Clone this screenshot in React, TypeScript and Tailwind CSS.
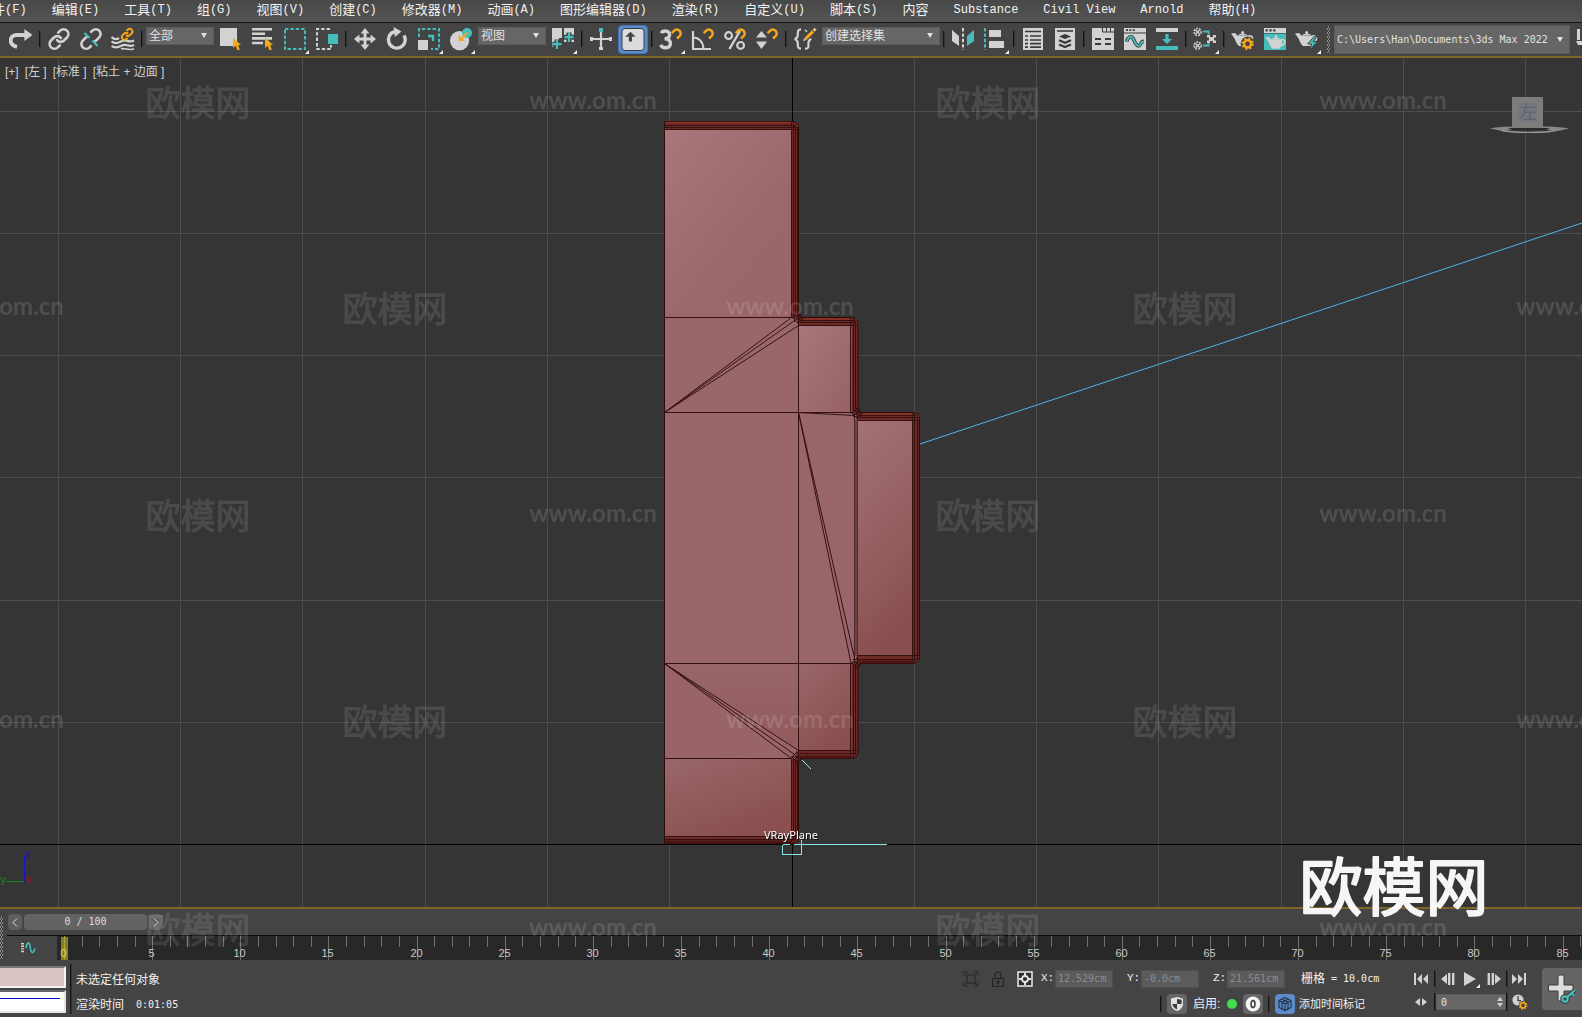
import React from "react";

type IconProps = {
  children: React.ReactNode;
  className?: string;
};

const LIGHT = "#d2d2d2";
const TEAL = "#45bdbd";
const AMBER = "#f5a81c";

const Icon: React.FC<IconProps> = ({ children, className = "h-6 w-6" }) => (
  <svg viewBox="0 0 24 24" className={className} fill="none" aria-hidden="true">
    {children}
  </svg>
);

type ToolProps = {
  label: string;
  children: React.ReactNode;
  flyout?: boolean;
  active?: boolean;
};

const Tool: React.FC<ToolProps> = ({ label, children, flyout, active }) => (
  <button
    type="button"
    aria-label={label}
    className="relative grid h-8 w-8 shrink-0 place-items-center"
  >
    {active && (
      <span className="absolute inset-x-px top-0.5 bottom-px rounded-sm border border-[#4673b5] bg-[#5c8bc9]" />
    )}
    <Icon className="relative h-6 w-6">{children}</Icon>
    {flyout && (
      <svg viewBox="0 0 4 4" className="absolute right-0.5 bottom-px h-1 w-1" aria-hidden="true">
        <path d="M4 0V4H0Z" fill="#f0f0f0" />
      </svg>
    )}
  </button>
);

const Divider = () => (
  <span className="mx-0.5 mt-2 h-4 w-0.5 shrink-0 border-l border-[#161616] bg-[#303030]" />
);

type DropProps = {
  label: string;
  value: string;
  box: string;
  text?: string;
};

const Drop: React.FC<DropProps> = ({ label, value, box, text = "text-xs" }) => (
  <div className={`relative shrink-0 ${box}`}>
    <select
      aria-label={label}
      className={`block h-full w-full appearance-none border border-[#5b5b5b] bg-[#666666] pl-0.5 text-[#e2e2e2] outline-none ${text}`}
    >
      <option>{value}</option>
    </select>
    <svg
      viewBox="0 0 6 5"
      className="pointer-events-none absolute top-1/2 right-[7px] -mt-[3px] h-[5px] w-1.5"
      aria-hidden="true"
    >
      <path d="M0 0H6L3 5Z" fill="#e0e0e0" />
    </svg>
  </div>
);

const Magnet = ({ x, y }: { x: number; y: number }) => (
  <path
    transform={`translate(${x} ${y})`}
    d="M1 5.5L4.6 2.2A4 4 0 0 1 9.6 7.8L6.4 11"
    stroke={AMBER}
    strokeWidth="2.4"
  />
);

const Cursor = () => (
  <path d="M14 10.5V21L16.6 18.8L18.4 23H20.8L19.2 18H22Z" fill={AMBER} />
);

const Teapot = () => (
  <>
    <path
      d="M0 6.4L4 6L6.4 8.6H17.4C19.2 10.6 18.8 15.6 15.4 19H8C5.6 17.4 4.8 14 3.4 11.2Z"
      fill={LIGHT}
    />
    <path d="M7 8.2C8.4 6.2 15 6.2 16.4 8.2Z" fill={LIGHT} />
    <circle cx="11.6" cy="5.4" r="1.5" fill={LIGHT} />
    <path d="M17.2 9.4C22.6 7.2 23.2 13.8 17 15.8" stroke={LIGHT} strokeWidth="1.8" />
  </>
);

const Gear = ({ x, y, r }: { x: number; y: number; r: number }) => (
  <g transform={`translate(${x} ${y})`}>
    <circle r={r} stroke={AMBER} strokeWidth="2.4" />
    <circle r={r + 1.6} stroke={AMBER} strokeWidth="2" strokeDasharray="2 2.1" />
  </g>
);

const menu = [
  ["文件", "(F)"],
  ["编辑", "(E)"],
  ["工具", "(T)"],
  ["组", "(G)"],
  ["视图", "(V)"],
  ["创建", "(C)"],
  ["修改器", "(M)"],
  ["动画", "(A)"],
  ["图形编辑器", "(D)"],
  ["渲染", "(R)"],
  ["自定义", "(U)"],
  ["脚本", "(S)"],
  ["内容", ""],
  ["", "Substance"],
  ["", "Civil View"],
  ["", "Arnold"],
  ["帮助", "(H)"],
];

const MenuBar = () => (
  <nav className="h-[23px] shrink-0 overflow-hidden border-b border-[#141414] bg-linear-to-b from-[#484848] to-[#545454]">
    <ul className="-ml-[21px] flex gap-[25px] whitespace-nowrap text-[#f2f2f2]">
      {menu.map(([name, hot]) => (
        <li key={name + hot}>
          <button type="button" className="flex h-5 items-center">
            <span className="text-[13px]">{name}</span>
            <span className="font-['Liberation_Mono',monospace] text-xs">{hot}</span>
          </button>
        </li>
      ))}
    </ul>
  </nav>
);

const Toolbar = () => (
  <div className="flex h-[35px] shrink-0 items-start overflow-hidden border-b-2 border-[#7d6628] bg-[#444444] pl-[5px]">
    <Tool label="重做">
      <path d="M8 19.8C-1 17.6.2 8 8 8H16" stroke={LIGHT} strokeWidth="3.8" />
      <path d="M15.4 2L23.4 8L15.4 14Z" fill={LIGHT} />
    </Tool>
    <Divider />
    <Tool label="选择并链接">
      <g stroke={LIGHT} strokeWidth="2.6" strokeLinecap="round">
        <path d="M10 13a4.6 4.6 0 0 0 7 .5l3-3a4.7 4.7 0 0 0-6.8-6.8l-2 2" />
        <path d="M14 11a4.6 4.6 0 0 0-7-.5l-3 3a4.7 4.7 0 0 0 6.8 6.8l2-2" />
      </g>
    </Tool>
    <Tool label="取消链接选择">
      <g stroke={LIGHT} strokeWidth="2.6">
        <path d="M11.4 5.6l2-2a4.7 4.7 0 0 1 6.8 6.8l-3 3a4.6 4.6 0 0 1-2.6 1.4" />
        <path d="M12.6 18.4l-2 2a4.7 4.7 0 0 1-6.8-6.8l3-3a4.6 4.6 0 0 1 2.2-1.2" />
      </g>
      <path d="M5.4 6L10.6 11M13.4 13.6L18.6 19" stroke={TEAL} strokeWidth="2.2" />
    </Tool>
    <Tool label="绑定到空间扭曲">
      <g stroke={LIGHT} strokeWidth="2.2">
        <path d="M.6 10C3 12.6 5.6 12.6 8 11" />
        <path d="M.6 14.4C6 19.4 10 12.4 15 13.6C18 14.4 20 15.4 23 13.4" />
        <path d="M.6 18.8C6 23.6 10 16.8 15 18C18 18.8 20 19.8 23 17.8" />
        <path d="M10 21.8C14 20.6 18 24 23 21.8" strokeWidth="1.6" />
      </g>
      <g stroke={AMBER} strokeWidth="2" transform="translate(9.4 .6) scale(.56)">
        <path strokeWidth="3.4" d="M10 13a4.6 4.6 0 0 0 7 .5l3-3a4.7 4.7 0 0 0-6.8-6.8l-2 2" />
        <path strokeWidth="3.4" d="M14 11a4.6 4.6 0 0 0-7-.5l-3 3a4.7 4.7 0 0 0 6.8 6.8l2-2" />
      </g>
    </Tool>
    <Divider />
    <Drop label="选择过滤器" value="全部" box="mx-px mt-1 h-[18px] w-[68px]" />
    <Tool label="选择对象">
      <path d="M1 1H18V19H1Z" fill={LIGHT} />
      <Cursor />
    </Tool>
    <Tool label="按名称选择">
      <path d="M1 2.2H21M1 6.8H14M1 11.4H21M1 16H12" stroke={LIGHT} strokeWidth="2.6" />
      <Cursor />
    </Tool>
    <Tool label="矩形选择区域" flyout>
      <rect x="2" y="2" width="20" height="20" stroke={TEAL} strokeWidth="2" strokeDasharray="3.4 2" />
    </Tool>
    <Tool label="窗口/交叉">
      <path d="M15 2H2V22H16V18" stroke={LIGHT} strokeWidth="2" strokeDasharray="3.4 2" />
      <path d="M13 7H23V17H13Z" fill={TEAL} />
    </Tool>
    <Divider />
    <Tool label="选择并移动">
      <path d="M12 3V21M3 12H21" stroke={LIGHT} strokeWidth="3" />
      <path
        d="M12 1L16.4 6.4H7.6ZM12 23L7.6 17.6H16.4ZM1 12L6.4 7.6V16.4ZM23 12L17.6 16.4V7.6Z"
        fill={LIGHT}
      />
    </Tool>
    <Tool label="选择并旋转">
      <path d="M9.6 4.6A8.4 8.4 0 1 0 19 8.4" stroke={LIGHT} strokeWidth="3.4" />
      <path d="M8.6 0L16.4 4.6L9.8 10Z" fill={LIGHT} />
    </Tool>
    <Tool label="选择并均匀缩放" flyout>
      <path d="M2 10V2H22V22H14" stroke={TEAL} strokeWidth="2" strokeDasharray="3.4 2" />
      <path d="M1 13H11V23H1Z" fill={LIGHT} />
      <path d="M11 9H16V14" stroke={TEAL} strokeWidth="2.4" />
    </Tool>
    <Tool label="选择并放置" flyout>
      <circle cx="10.6" cy="13.6" r="9.6" fill={LIGHT} />
      <circle cx="18" cy="6" r="5" fill={TEAL} />
      <path d="M18.4 5.6L13 11" stroke={AMBER} strokeWidth="2" />
      <path d="M9.8 7.8V14H16Z" fill={AMBER} />
    </Tool>
    <Drop label="参考坐标系" value="视图" box="mx-px mt-1 h-[18px] w-[68px]" />
    <Tool label="使用轴点中心" flyout>
      <path d="M1 1H11V11H8V15H5V20H1ZM13 1H23V7H20V4H17V7H13Z" fill={LIGHT} />
      <path d="M13 1H23V15H13Z" fill={LIGHT} />
      <path d="M6 12.4V22M1.4 17.2H10.6M18 5.4V16M13 10.2H23" stroke="#444444" strokeWidth="5" />
      <path d="M6 12.4V22M1.4 17.2H10.6M18 5.4V15M13.4 10.2H22.6" stroke={TEAL} strokeWidth="2.2" />
    </Tool>
    <Divider />
    <Tool label="选择并操纵">
      <path d="M12 5V23M2 12H22" stroke={LIGHT} strokeWidth="2.2" />
      <path d="M1 10H4V14H1ZM20 10H23V14H20ZM10 20H14V23H10Z" fill={LIGHT} />
      <path d="M10 1H14V5H10Z" fill={TEAL} />
    </Tool>
    <Tool label="键盘快捷键覆盖切换" active>
      <rect x="1" y="1.5" width="22" height="22" rx="3" fill="#dcdcdc" stroke="#323b4a" />
      <path d="M9.4 4.8L14.6 9.8H11V14.4H7.8V9.8H4.2Z" fill="#444444" />
    </Tool>
    <Divider />
    <Tool label="捕捉开关" flyout>
      <path
        d="M2.4 6.2C3.6 3.4 10 3 10.6 7.2C10.8 10 8.8 11.6 5.6 11.8C9.4 11.8 11.8 13.6 11.4 17C10.8 21.8 3.4 22 1.8 17.8"
        stroke={LIGHT}
        strokeWidth="3.4"
      />
      <Magnet x={11.6} y={0.6} />
    </Tool>
    <Tool label="角度捕捉切换">
      <path d="M2 4V22H20" stroke={LIGHT} strokeWidth="2.2" />
      <path d="M2 10.6C8 10.6 12.4 15 12.4 22" stroke={LIGHT} strokeWidth="2" />
      <Magnet x={11.6} y={0.6} />
    </Tool>
    <Tool label="百分比捕捉切换">
      <circle cx="5.6" cy="8.6" r="3.4" stroke={LIGHT} strokeWidth="2.2" />
      <circle cx="17.6" cy="18.4" r="3.4" stroke={LIGHT} strokeWidth="2.2" />
      <path d="M17 4L6.4 22" stroke={LIGHT} strokeWidth="2.4" />
      <Magnet x={11.6} y={0.6} />
    </Tool>
    <Tool label="微调器捕捉切换">
      <path d="M6.4 4L12 10.6H1ZM1 14.4H12L6.4 22Z" fill={LIGHT} />
      <Magnet x={11.6} y={0.6} />
    </Tool>
    <Divider />
    <Tool label="编辑命名选择集">
      <path
        d="M8 2.4C4.6 2.4 4.8 4.6 4.8 7.4C4.8 10 4.2 11.4 1.6 12C4.2 12.6 4.8 14 4.8 16.6C4.8 19.4 4.6 21.6 8 21.6M12 21.6C16.4 21.8 15.4 19 15.4 16.6C15.4 14 15.6 12.6 18.4 12"
        stroke={LIGHT}
        strokeWidth="2.2"
      />
      <path d="M12.4 12L20 4.4" stroke={AMBER} strokeWidth="3" />
      <path d="M20.6 3.8L22.6 1.8" stroke="#f0c27a" strokeWidth="3" />
      <path d="M12 3L14 4.6M10.6 13.6L12.4 12" stroke={LIGHT} strokeWidth="1.6" />
    </Tool>
    <Drop label="命名选择集" value="创建选择集" box="mx-px mt-1 h-[18px] w-[118px]" />
    <Divider />
    <Tool label="镜像">
      <path d="M1 3L8 9V19L1 14Z" fill={LIGHT} />
      <path d="M12 1V23" stroke={LIGHT} strokeWidth="2" strokeDasharray="3.4 2" />
      <path d="M23 3L16 9V19L23 14Z" fill={TEAL} />
    </Tool>
    <Tool label="对齐" flyout>
      <path d="M2 1V23" stroke={TEAL} strokeWidth="2" strokeDasharray="3.4 2" />
      <path d="M6 3H18V10H6ZM6 14H21V21H6Z" fill={LIGHT} />
    </Tool>
    <Divider />
    <Tool label="切换场景资源管理器">
      <path d="M2 1H22V23H2Z" fill={LIGHT} />
      <path
        d="M4 4.5H20M4 9H7M9 9H20M4 13H7M9 13H20M4 16.6H7M9 16.6H20M4 20.2H7M9 20.2H20"
        stroke="#3a3a3a"
        strokeWidth="1.7"
      />
    </Tool>
    <Tool label="切换层资源管理器">
      <path d="M2 1H22V23H2Z" fill={LIGHT} />
      <path d="M4 4H20" stroke="#3a3a3a" strokeWidth="1.6" />
      <path d="M6 9.4L12 7L18 9.4L12 12Z" fill="#3a3a3a" />
      <path d="M6 13.2L12 15.8L18 13.2M6 17.4L12 20L18 17.4" stroke="#3a3a3a" strokeWidth="2.2" />
    </Tool>
    <Divider />
    <Tool label="切换功能区">
      <path d="M1 1H23V23H1Z" fill={LIGHT} />
      <path d="M11.5 1V5H23M15.5 1V5M19.5 1V5" stroke="#3a3a3a" strokeWidth="1" />
      <path d="M4 12H10M14 12H20M4 17H10M14 17H20" stroke="#3a3a3a" strokeWidth="2.2" />
    </Tool>
    <Tool label="曲线编辑器">
      <path d="M1 1H23V23H1Z" fill={LIGHT} />
      <path d="M1 6H23" stroke="#3a3a3a" strokeWidth="1" />
      <path d="M3 3.2H5M6.4 3.2H8.4M9.8 3.2H11.8" stroke="#3a3a3a" strokeWidth="1.8" />
      <path
        d="M3.6 14.6C4.6 10.4 8.4 7.6 10.4 12C12 16 14.6 21 17 18C18.2 16.4 17.6 14.6 21 14.4"
        stroke="#3a3a3a"
        strokeWidth="3.6"
      />
      <path
        d="M3.6 14.6C4.6 10.4 8.4 7.6 10.4 12C12 16 14.6 21 17 18C18.2 16.4 17.6 14.6 21 14.4"
        stroke={TEAL}
        strokeWidth="2"
      />
    </Tool>
    <Tool label="图解视图">
      <path d="M1 1H23V5H1Z" fill={LIGHT} />
      <path d="M1 19H23V23H1Z" fill={TEAL} />
      <path d="M10.4 7H13.6V12H17L12 17L7 12H10.4Z" fill={TEAL} />
    </Tool>
    <Divider />
    <Tool label="材质编辑器" flyout>
      <g stroke={LIGHT} strokeWidth="1.4">
        <circle cx="4.6" cy="5" r="3.6" strokeDasharray="2 1" />
        <circle cx="4.6" cy="18.6" r="3.6" strokeDasharray="2 1" />
        <path d="M2.4 2.8L6.8 7.2M6.8 2.8L2.4 7.2M2.4 16.4L6.8 20.8M6.8 16.4L2.4 20.8" />
      </g>
      <path
        d="M14 8H17V10H20V8H23V10.6H21V13.4H23V16H20V14H17V16H14V13.4H16V10.6H14Z"
        fill={LIGHT}
      />
      <path d="M10 4.6H15.6V7.4M10 18.6H15.6V16.6" stroke={TEAL} strokeWidth="2" />
    </Tool>
    <Divider />
    <Tool label="渲染设置">
      <Teapot />
      <circle cx="16.6" cy="16.6" r="7" fill="#444444" />
      <Gear x={16.6} y={16.8} r={3.6} />
    </Tool>
    <Tool label="渲染帧窗口">
      <path d="M1 1H23V6H1Z" fill={LIGHT} />
      <path d="M2.6 3.4H4.8M6.4 3.4H8.6M10.2 3.4H12.4" stroke="#3a3a3a" strokeWidth="2.2" />
      <path d="M1 6.6H23V23H1Z" fill={TEAL} />
      <g transform="translate(2.4 4.6) scale(.9)">
        <Teapot />
      </g>
    </Tool>
    <Tool label="渲染产品" flyout>
      <Teapot />
      <path d="M19.6 9L12.6 17H16.6L14.4 23.4L22.4 14.6H18.4L22 9Z" fill={TEAL} stroke="#444444" />
    </Tool>
    <span className="mt-[3px] ml-1 h-[27px] w-[3px] shrink-0 bg-[repeating-conic-gradient(#8a8a8a_0_25%,#3c3c3c_0_50%)] bg-[length:2px_4px]" />
    <Drop
      label="项目文件夹"
      value="C:\Users\Han\Documents\3ds Max 2022"
      box="mt-0.5 ml-1 h-[29px] w-[236px]"
      text="text-[10px] font-['DejaVu_Sans_Mono',monospace]"
    />
    <button type="button" aria-label="项目工具栏" className="mt-1.5 ml-1.5 shrink-0">
      <svg viewBox="0 0 16 18" className="h-[18px] w-4" aria-hidden="true">
        <path d="M1 0H4V11H1ZM0 12H9V16H2Z" fill={LIGHT} />
      </svg>
    </button>
  </div>
);

const EDGE = "#34110f";
const gridX = [58, 180, 302, 425, 547, 669, 914, 1036, 1158, 1281, 1403, 1525];
const gridY = [111, 233, 355, 477, 600, 722];

// Outline of the stepped moulding profile
const outline =
  "M664.5 121.5H792Q798.5 121.5 798.5 128V313Q798.5 317.5 803 317.5H851Q858 317.5 858 324.5V408Q858 412.5 862 412.5H912.5Q919.5 412.5 919.5 419.5V656.5Q919.5 663.5 912.5 663.5H862Q858 663.5 858 668V751.5Q858 758.5 851 758.5H803Q798.5 758.5 798.5 763V837Q798.5 843.5 792 843.5H664.5Z";

const spark = (x: number, y: number) =>
  `M${x - 6} ${y}H${x + 6}M${x} ${y - 6}V${y + 6}M${x - 4} ${y - 4}L${x + 4} ${y + 4}M${x + 4} ${y - 4}L${x - 4} ${y + 4}M${x} ${y - 5}L${x + 5} ${y}L${x} ${y + 5}L${x - 5} ${y}Z`;

const Scene = () => (
  <svg
    viewBox="0 58 1582 849"
    preserveAspectRatio="xMidYMid slice"
    className="absolute inset-0 h-full w-full"
    fill="none"
    role="img"
    aria-label="左视图"
  >
    <defs>
      <linearGradient id="topFace" x1="0" y1="0" x2="1" y2="1.2">
        <stop offset="0" stopColor="#a9777b" />
        <stop offset=".55" stopColor="#9a686c" />
        <stop offset="1" stopColor="#976468" />
      </linearGradient>
      <linearGradient id="stepFace" x1="0" y1="0" x2="1" y2="1">
        <stop offset="0" stopColor="#a6777b" />
        <stop offset="1" stopColor="#966164" />
      </linearGradient>
      <linearGradient id="lowFace" x1="0" y1="0" x2=".6" y2="1">
        <stop offset="0" stopColor="#99676b" />
        <stop offset="1" stopColor="#8a4f4e" />
      </linearGradient>
      <linearGradient id="noseFace" x1="0" y1="0" x2=".25" y2="1">
        <stop offset="0" stopColor="#a17276" />
        <stop offset=".5" stopColor="#976265" />
        <stop offset="1" stopColor="#8a504f" />
      </linearGradient>
      <linearGradient id="fanFace" x1="0" y1="0" x2="0" y2="1">
        <stop offset="0" stopColor="#98666a" />
        <stop offset="1" stopColor="#925a5c" />
      </linearGradient>
    </defs>

    <g stroke="#4d4d4d" shapeRendering="crispEdges">
      {gridX.map((x) => (
        <path key={x} d={`M${x}.5 58V907`} />
      ))}
      {gridY.map((y) => (
        <path key={y} d={`M0 ${y}.5H1582`} />
      ))}
      <path d="M792.5 58V907M0 844.5H1582" stroke="#000000" />
    </g>

    <path d={outline} fill="#6d2a26" stroke="#2b0b09" />
    <path d="M665 122.5H791Q796 122.5 797.5 127" stroke="#8f3327" strokeWidth="1.6" />
    <path d="M803 319H851M862 414H912" stroke="#8f3327" strokeWidth="1.6" />
    <path d="M665 842H792M803 757H851M862 662H912" stroke="#4a1512" strokeWidth="3" />

    <path d="M665 129.5H791.5V317.5H665Z" fill="url(#topFace)" />
    <path d="M665 317.5H798.5V412.5H665Z" fill="#99676b" />
    <path d="M798.5 325.5H851.5V412.5H798.5Z" fill="url(#stepFace)" />
    <path d="M665 412.5H798.5V663.5H665Z" fill="#99676b" />
    <path d="M798.5 412.5H857.5V663.5H798.5Z" fill="#98666a" />
    <path d="M857.5 420.5H912.5V655.5H857.5Z" fill="url(#noseFace)" />
    <path d="M665 663.5H798.5V758.5H665Z" fill="#98646a" />
    <path d="M665 663.5L798.5 750V663.5Z" fill="url(#fanFace)" />
    <path d="M798.5 663.5H851.5V750.5H798.5Z" fill="url(#lowFace)" />
    <path d="M665 758.5H791.5V836.5H665Z" fill="url(#lowFace)" />

    <g stroke={EDGE} strokeWidth="1">
      <path d="M664.5 129.5H797M664.5 127.5H797M664.5 125.5H796M664.5 836.5H797M664.5 839.5H796" />
      <path d="M791.5 122V317M793.5 122V317M795.5 124V316M797.5 127V316" />
      <path d="M791.5 759V843M793.5 759V843M795.5 760V841M797.5 762V838" />
      <path d="M798.5 317.5V758.5M664.5 317.5H791.5M664.5 412.5H852M664.5 663.5H852M664.5 758.5H791.5" />
      <path d="M798.5 325.5H857M800 322.5H856M800 320.5H855M798.5 750.5H857M800 753.5H856" />
      <path d="M850.5 318V412M853.5 318V412M855.5 321V411M850.5 664V758M853.5 664V758M855.5 665V755" />
      <path d="M857 420.5H919M859 417.5H918M859 415.5H916M857 655.5H919M859 659.5H917" />
      <path d="M912.5 413V663M914.5 414V663M917.5 417V660M854.5 413V663M857.5 413V663" />
      <path d="M664.5 412.5L791.5 317.5M664.5 412.5L796 319.5M664.5 412.5L798.5 325.5" />
      <path d="M664.5 663.5L798.5 750.5M664.5 663.5L796 755.5M664.5 663.5L791.5 758.5" />
      <path d="M798.5 412.5L854.5 415.5M798.5 412.5L851 663M798.5 412.5L854.5 658" />
      <path d={spark(798, 318)} />
      <path d={spark(857, 413)} />
      <path d={spark(857, 663)} />
      <path d={spark(797, 757)} />
    </g>
    <path d="M854.5 420V656H857.5V420Z" fill="#6e4346" />

    <path d="M920 444L1582 223" stroke="#55b0e8" />
    <path d="M802 760L811 769" stroke="#8ff0ee" />
    <path
      d="M794 844.5H887M782.5 844.5V854.5H801.5V836M782.5 844.5H790"
      stroke="#86e4e2"
      shapeRendering="crispEdges"
    />
    <g className="font-['Noto_Sans',sans-serif] text-[11px]">
      <text x="764" y="839" fill="#ffffff" className="drop-shadow-[1px_1px_0_#111111]">
        VRayPlane
      </text>
    </g>

    <path d="M24.5 857V882" stroke="#1414c8" />
    <path d="M7 881.5H24" stroke="#0f8a14" />
    <g className="font-['DejaVu_Sans',sans-serif] text-[11px]">
      <text x="24" y="858" fill="#1414c8">
        z
      </text>
      <text x="0" y="883" fill="#0f8a14">
        y
      </text>
      <text x="25" y="883" fill="#a01414">
        x
      </text>
    </g>

    <path d="M1490 128.5C1500 125.5 1558 125.5 1569 128.5L1558 131C1545 128.5 1513 128.5 1502 131Z" fill="#85888c" />
    <path d="M1508 128H1550L1546 130H1512Z" fill="#2a2a2a" />
    <path d="M1502 130.5C1512 133 1546 133 1556 130.5" stroke="#9a9da1" strokeWidth="1.4" />
    <path d="M1512 97H1543V128H1512Z" fill="#7c7c7c" />
    <path d="M1518 103H1537V122H1518Z" fill="#74787e" />
    <text x="1519" y="119" fill="#5f636c" className="text-[18px]">
      左
    </text>
  </svg>
);

const Viewport = () => (
  <main className="relative min-h-0 flex-1 overflow-hidden border-b-2 border-[#7d6628] bg-[#353535]">
    <Scene />
    <div className="relative flex gap-1.5 pt-1.5 pl-[5px] text-xs leading-4 text-[#d0d0d0]">
      <button type="button">[+]</button>
      <button type="button">[左 ]</button>
      <button type="button">[标准 ]</button>
      <button type="button">[粘土 + 边面 ]</button>
    </div>
  </main>
);

const frames = Array.from({ length: 90 }, (_, i) => i);
const tickX = (frame: number) => Math.round(7 + frame * 17.63) + 0.5;

const Timeline = () => (
  <section className="flex h-[52px] shrink-0 bg-[#444444]">
    <span className="mt-[7px] mr-1 h-[43px] w-[3px] shrink-0 bg-[repeating-conic-gradient(#8a8a8a_0_25%,#3c3c3c_0_50%)] bg-[length:2px_4px]" />
    <div className="flex min-w-0 flex-1 flex-col">
      <div className="flex h-[26px] items-start gap-0.5 pt-[5px] pl-px text-[#dddddd]">
        <button type="button" aria-label="上一帧" className="grid h-4 w-3.5 place-items-center rounded-sm bg-[#5e5e5e]">
          <svg viewBox="0 0 6 9" className="h-[9px] w-1.5" fill="none" aria-hidden="true">
            <path d="M5 .5L1 4.5L5 8.5" stroke="#dddddd" />
          </svg>
        </button>
        <button
          type="button"
          className="h-4 w-[123px] rounded-sm bg-[#636363] font-['DejaVu_Sans_Mono',monospace] text-[10px] leading-4"
        >
          0 / 100
        </button>
        <button type="button" aria-label="下一帧" className="grid h-4 w-3.5 place-items-center rounded-sm bg-[#5e5e5e]">
          <svg viewBox="0 0 6 9" className="h-[9px] w-1.5" fill="none" aria-hidden="true">
            <path d="M1 .5L5 4.5L1 8.5" stroke="#dddddd" />
          </svg>
        </button>
      </div>
      <div className="flex h-[25px] border-t border-[#0c0c0c]">
        <button type="button" aria-label="打开迷你曲线编辑器" className="grid w-[50px] shrink-0 place-items-center pr-2">
          <svg viewBox="0 0 16 12" className="h-3 w-4" fill="none" aria-hidden="true">
            <path d="M2.5 1V11" stroke={LIGHT} strokeWidth="3" strokeDasharray="1.4 1.2" />
            <path d="M6 6C7 0 9.4-.6 10.2 5C11 11.6 13 12.6 15 6.4" stroke={TEAL} strokeWidth="1.6" />
          </svg>
        </button>
        <div className="min-w-0 flex-1 overflow-hidden bg-[#282828]">
          <svg className="h-full w-full" aria-label="时间轴">
            <rect x="4" y="1" width="7" height="23" fill="#86811f" />
            {frames.map((f) => (
              <path
                key={f}
                d={`M${tickX(f)} 0V${f % 5 ? 11 : 25}`}
                stroke={f ? "#6f6f6f" : "#a9a44a"}
                shapeRendering="crispEdges"
              />
            ))}
            {frames
              .filter((f) => f % 5 === 0)
              .map((f) => (
                <text
                  key={f}
                  x={tickX(f) - 1}
                  y="21"
                  textAnchor="middle"
                  fill={f ? "#c8c8c8" : "#e0dc60"}
                  className="font-['Liberation_Sans',sans-serif] text-[11px]"
                >
                  {f}
                </text>
              ))}
          </svg>
        </div>
      </div>
    </div>
  </section>
);

const Coord = ({ axis, value }: { axis: string; value: string }) => (
  <label className="mr-3.5 flex items-center">
    <span className="w-3.5 font-['Liberation_Mono',monospace] text-[11px]">{axis}:</span>
    <input
      defaultValue={value}
      className="h-[18px] w-[58px] border border-[#505050] bg-[#5b5b5b] pl-0.5 font-['DejaVu_Sans_Mono',monospace] text-[10px] text-[#8c8c8c] outline-none"
    />
  </label>
);

const VRule = ({ className }: { className: string }) => (
  <span className={`w-0.5 shrink-0 border-l border-[#141414] bg-[#323232] ${className}`} />
);

const Play = ({ label, d, w = "w-3.5" }: { label: string; d: string; w?: string }) => (
  <button type="button" aria-label={label} className={w}>
    <svg viewBox="0 0 14 14" className="h-3.5 w-3.5" aria-hidden="true">
      <path d={d} fill={LIGHT} />
    </svg>
  </button>
);

const StatusBar = () => (
  <footer className="flex h-14 shrink-0 items-start bg-[#444444] pt-[3px] text-xs text-[#f0f0f0]">
    <div className="mt-0.5 flex w-[66px] shrink-0 flex-col gap-0.5">
      <div className="h-[22px] border-2 border-l-0 border-[#f4f4f4] border-t-[#777777] bg-[#dcc4c4]" />
      <div className="h-[23px] border-2 border-l-0 border-[#e4e4e4] border-t-[#666666] bg-white pt-1.5 pr-1">
        <div className="h-px bg-[#0000c8]" />
      </div>
    </div>
    <VRule className="ml-1 h-[50px]" />
    <div className="ml-1 flex min-w-0 flex-1 flex-col whitespace-nowrap">
      <p className="h-[25px] pt-2 leading-4">未选定任何对象</p>
      <p className="flex h-[25px] gap-3 pt-2 leading-4">
        渲染时间
        <span className="font-['DejaVu_Sans_Mono',monospace] text-[10px]">0:01:05</span>
      </p>
    </div>

    <div className="flex w-[451px] shrink-0 flex-col">
      <div className="flex h-[29px] items-center">
        <button type="button" aria-label="孤立当前选择" className="mr-3">
          <svg viewBox="0 0 16 16" className="h-4 w-4" fill="none" aria-hidden="true">
            <path
              d="M1 5V1H5M11 1H15V5M15 11V15H11M5 15H1V11M4 4H12V12H4ZM2.4 2.4L4 4M13.6 2.4L12 4M2.4 13.6L4 12M13.6 13.6L12 12"
              stroke="#262626"
            />
          </svg>
        </button>
        <button type="button" aria-label="选择锁定切换" className="mr-3">
          <svg viewBox="0 0 14 16" className="h-4 w-3.5" fill="none" aria-hidden="true">
            <path d="M4 7V4A3 3 0 0 1 10 4V7M1.5 7.5H12.5V15.5H1.5Z" stroke="#242424" strokeWidth="1.2" />
            <path d="M5.6 9.4H8.4V11L7.6 13.4H6.4L5.6 11Z" fill="#242424" />
          </svg>
        </button>
        <button type="button" aria-label="绝对模式变换输入" className="mr-2">
          <svg viewBox="0 0 16 16" className="h-4 w-4" fill="none" aria-hidden="true">
            <rect x="1" y="1" width="14" height="14" fill="#2c2c2c" stroke="#e2e2e2" strokeWidth="1.6" />
            <circle cx="8" cy="8" r="3" stroke="#e2e2e2" strokeWidth="1.8" />
            <path d="M8 2V5M8 11V14M2 8H5M11 8H14" stroke="#e2e2e2" strokeWidth="2" />
          </svg>
        </button>
        <Coord axis="X" value="12.529cm" />
        <Coord axis="Y" value="-0.0cm" />
        <Coord axis="Z" value="21.561cm" />
        <span className="ml-0.5 flex items-center gap-1.5 whitespace-nowrap">
          栅格
          <span className="font-['DejaVu_Sans_Mono',monospace] text-[10px]">= 10.0cm</span>
        </span>
      </div>
      <div className="flex h-[22px] items-center pl-[197px]">
        <VRule className="h-4" />
        <button type="button" aria-label="安全场景脚本" className="ml-[5px] grid h-5 w-5 place-items-center rounded-sm bg-[#656565]">
          <svg viewBox="0 0 12 14" className="h-3.5 w-3" aria-hidden="true">
            <path d="M6 0L12 1.6V7C12 10.4 9.4 12.8 6 14C2.6 12.8 0 10.4 0 7V1.6Z" fill="#e0e0e0" />
            <path d="M6 2V7H10.6V2.8ZM6 7H1.4C1.6 9.4 3.6 11.4 6 12.4Z" fill="#3c3c3c" />
          </svg>
        </button>
        <span className="ml-1.5 w-[34px]">启用:</span>
        <span className="h-2.5 w-2.5 rounded-full bg-[#42dc4a]" />
        <button type="button" aria-label="场景安全" className="ml-1.5 grid h-5 w-5 place-items-center rounded-sm bg-[#656565]">
          <svg viewBox="0 0 16 16" className="h-4 w-4" fill="none" aria-hidden="true">
            <circle cx="8" cy="8" r="7.4" fill="#f4f4f4" />
            <ellipse cx="8" cy="8" rx="2" ry="3.4" stroke="#444444" strokeWidth="1.6" />
          </svg>
        </button>
        <VRule className="ml-[5px] h-4" />
        <button type="button" aria-label="时间标记" className="ml-[5px] grid h-5 w-5 place-items-center rounded-sm bg-[#5c8bc9]">
          <svg viewBox="0 0 16 16" className="h-4 w-4" fill="none" aria-hidden="true">
            <path
              d="M8 1.4L14 4.6V11.4L8 14.6L2 11.4V4.6ZM2 4.6L8 8L14 4.6M8 8V14.6M5 3L11 6.4V13M11 3L5 6.4V13"
              stroke="#22324a"
              strokeWidth="1.1"
            />
          </svg>
        </button>
        <button type="button" className="ml-1 text-[11px] whitespace-nowrap">
          添加时间标记
        </button>
      </div>
    </div>

    <div className="flex shrink-0 flex-col">
      <div className="flex h-[29px] items-center">
        <Play label="转至开头" w="w-5" d="M0 1H2V13H0ZM8 2V12L3 7ZM14 2V12L9 7Z" />
        <VRule className="h-4" />
        <div className="relative flex w-[70px] justify-between px-[5px]">
          <Play label="上一帧" d="M6 2V12L0 7ZM7 1H9.4V13H7ZM11 1H13.4V13H11Z" />
          <Play label="播放动画" d="M0 0L12 7L0 14Z" />
          <Play label="下一帧" d="M8 2V12L14 7ZM4.6 1H7V13H4.6ZM.6 1H3V13H.6Z" />
          <svg viewBox="0 0 4 4" className="absolute right-[26px] -bottom-0.5 h-1 w-1" aria-hidden="true">
            <path d="M4 0V4H0Z" fill="#f0f0f0" />
          </svg>
        </div>
        <VRule className="mr-1 h-4" />
        <Play label="转至结尾" w="w-4" d="M12 1H14V13H12ZM6 2V12L11 7ZM0 2V12L5 7Z" />
      </div>
      <div className="flex h-[18px] items-center">
        <button type="button" aria-label="关键点模式切换" className="w-5">
          <svg viewBox="0 0 14 10" className="h-2.5 w-3.5" aria-hidden="true">
            <path d="M6 1V9L1 5ZM8 1V9L13 5Z" fill={LIGHT} />
          </svg>
        </button>
        <VRule className="h-[18px]" />
        <div className="relative w-[70px]">
          <input
            aria-label="当前帧"
            defaultValue="0"
            className="block h-4 w-full border border-[#5a5a5a] bg-[#666666] pl-1 font-['DejaVu_Sans_Mono',monospace] text-[10px] text-[#e4e4e4] outline-none"
          />
          <svg viewBox="0 0 6 10" className="absolute top-[3px] right-[3px] h-2.5 w-1.5" aria-hidden="true">
            <path d="M0 4L3 0L6 4ZM0 6H6L3 10Z" fill={LIGHT} />
          </svg>
        </div>
        <VRule className="mr-1 h-[18px]" />
        <button type="button" aria-label="时间配置">
          <svg viewBox="0 0 16 16" className="h-4 w-4" fill="none" aria-hidden="true">
            <circle cx="6" cy="6" r="5.6" fill={LIGHT} />
            <path d="M6 2V6.6H9" stroke="#3a3a3a" strokeWidth="1.2" />
            <circle cx="11" cy="11.4" r="4.6" fill="#444444" />
            <circle cx="11" cy="11.4" r="2.6" stroke={AMBER} strokeWidth="1.6" />
            <circle cx="11" cy="11.4" r="3.8" stroke={AMBER} strokeWidth="1.2" strokeDasharray="1.4 1.6" />
          </svg>
        </button>
      </div>
    </div>
    <button
      type="button"
      aria-label="设置关键点"
      className="mt-1 ml-3.5 h-[42px] w-10 shrink-0 rounded-l-sm bg-[#656565]"
    >
      <svg viewBox="0 0 40 42" className="h-[42px] w-10" fill="none" aria-hidden="true">
        <path d="M16 7H22V17H31V23H22V33H16V23H6.5V17H16Z" fill="#dddddd" stroke="#3c3c3c" />
        <g stroke="#3c3c3c" strokeWidth="4.4">
          <circle cx="23" cy="31" r="2.6" />
          <path d="M25 29.4L33 22M29.6 25L32 27.6" />
        </g>
        <g stroke={TEAL} strokeWidth="2.2">
          <circle cx="23" cy="31" r="2.6" />
          <path d="M25 29.4L33 22M29.6 25L32 27.6" />
        </g>
      </svg>
    </button>
  </footer>
);

// Odd rows are shifted by half a step
const marks = [102, 308, 515, 721, 929].flatMap((y, row) =>
  [0, 1, 2, 3, 4]
    .filter((col) => row % 2 || col < 4)
    .map((col) => ({
      x: row % 2 ? col * 395 : 198 + col * 395,
      y,
      url: row % 2 ? col % 2 === 0 : col % 2 === 1,
    }))
);

const Watermarks = () => (
  <svg
    viewBox="0 0 1582 1017"
    preserveAspectRatio="xMidYMid slice"
    className="pointer-events-none absolute inset-0 h-full w-full"
    textAnchor="middle"
    strokeLinejoin="round"
    aria-hidden="true"
  >
    {marks.map(({ x, y, url }) =>
      url ? (
        <text
          key={`${x}-${y}`}
          x={x}
          y={y + 7}
          fill="#ffffff"
          opacity=".12"
          className="font-['Lato',sans-serif] text-[24px] font-bold"
        >
          www.om.cn
        </text>
      ) : (
        <text
          key={`${x}-${y}`}
          x={x}
          y={y + 14}
          fill="#ffffff"
          stroke="#ffffff"
          opacity=".1"
          className="text-[35px]"
        >
          欧模网
        </text>
      )
    )}
    <text
      x="1394"
      y="910"
      fill="#f6f6f6"
      stroke="#f6f6f6"
      strokeWidth="2"
      className="text-[63px]"
    >
      欧模网
    </text>
  </svg>
);

export default function App() {
  return (
    <div className="relative flex h-screen flex-col overflow-hidden bg-[#444444] font-['Liberation_Sans','Noto_Sans_CJK_SC',sans-serif]">
      <MenuBar />
      <Toolbar />
      <Viewport />
      <Timeline />
      <StatusBar />
      <Watermarks />
    </div>
  );
}
